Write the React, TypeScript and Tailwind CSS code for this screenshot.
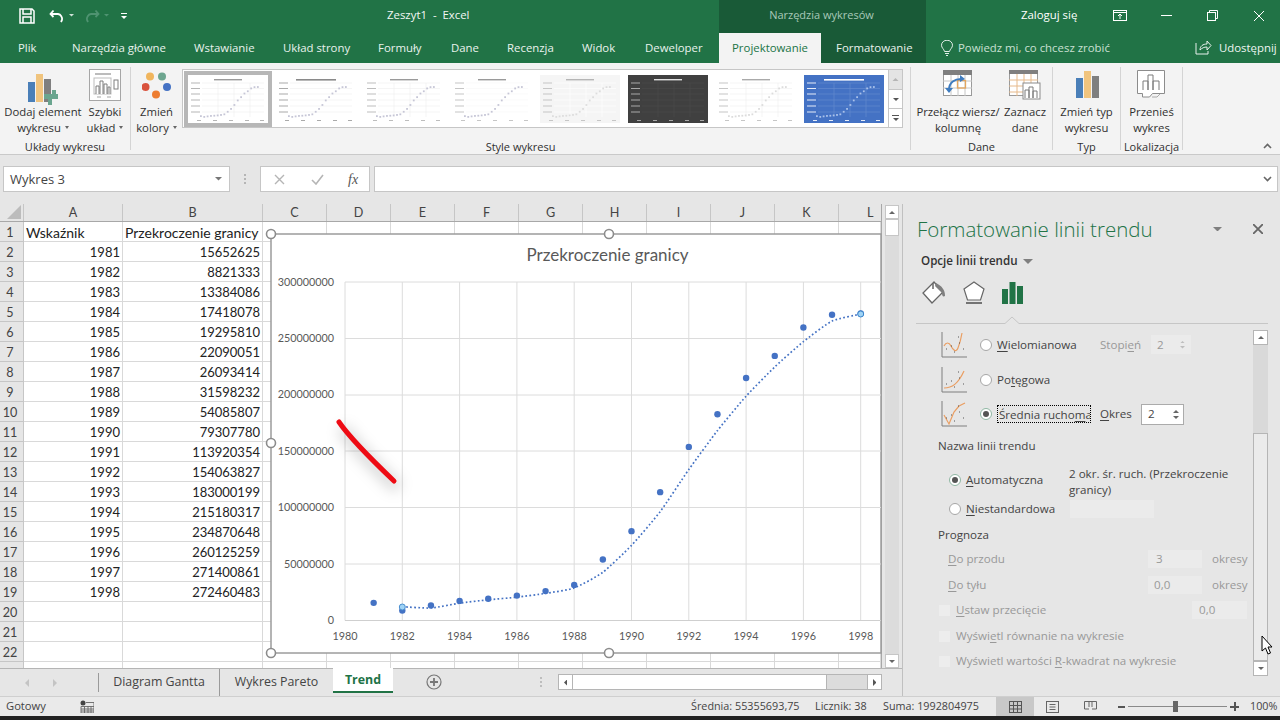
import React from "react";

const UI = "font-['Open_Sans','Noto_Sans',sans-serif]";
const CELL = "font-['Lato','Liberation_Sans',sans-serif]";

const DATA = [15652625, 8821333, 13384086, 17418078, 19295810, 22090051, 26093414, 31598232, 54085807, 79307780, 113920354, 154063827, 183000199, 215180317, 234870648, 260125259, 271400861, 272460483];
const YEARS = DATA.map((_, i) => 1981 + i);
const COLS: [string, number][] = [["A", 99], ["B", 140], ["C", 64], ["D", 64], ["E", 64], ["F", 64], ["G", 64], ["H", 64], ["I", 64], ["J", 64], ["K", 64], ["L", 42]];

const px = (year: number) => 345 + (year - 1980) * 28.65;
const py = (v: number) => 620.5 - (v / 300000000) * 338;

function smoothPath(pts: [number, number][]) {
  let d = `M${pts[0][0]} ${pts[0][1]}`;
  for (let i = 0; i < pts.length - 1; i++) {
    const p0 = pts[Math.max(0, i - 1)];
    const p1 = pts[i];
    const p2 = pts[i + 1];
    const p3 = pts[Math.min(pts.length - 1, i + 2)];
    d += ` C${p1[0] + (p2[0] - p0[0]) / 10} ${p1[1] + (p2[1] - p0[1]) / 10} ${p2[0] - (p3[0] - p1[0]) / 10} ${p2[1] - (p3[1] - p1[1]) / 10} ${p2[0]} ${p2[1]}`;
  }
  return d;
}

function Chart() {
  const avg: [number, number][] = DATA.slice(1).map((v, i) => [px(1982 + i), py((v + DATA[i]) / 2)]);
  const hs = [282, 338.5, 395, 451, 507.5, 564];
  const labels = ["300000000", "250000000", "200000000", "150000000", "100000000", "50000000", "0"];
  const yrs = [1980, 1982, 1984, 1986, 1988, 1990, 1992, 1994, 1996, 1998];
  const handles = [[271, 234], [609, 234], [271, 443], [271, 653], [609, 653]];
  return (
    <svg className="absolute left-[265px] top-[24px]" width={625} height={440} viewBox="265 228 625 440">
      <defs>
        <filter id="soft" x="-50%" y="-50%" width="200%" height="200%"><feGaussianBlur stdDeviation="7" /></filter>
      </defs>
      <rect x={271} y={234} width={610} height={419} fill="#fff" stroke="#9c9c9c" strokeWidth={1.5} />
      <text x={607.5} y={261} textAnchor="middle" fontSize={17} fill="#595959" fontFamily="Lato, sans-serif">Przekroczenie granicy</text>
      {hs.map((y) => <line key={y} x1={345} x2={881} y1={y} y2={y} stroke="#dcdcdc" />)}
      {yrs.map((y) => <line key={y} x1={px(y)} x2={px(y)} y1={282} y2={620.5} stroke="#dcdcdc" />)}
      <line x1={345} x2={881} y1={620.5} y2={620.5} stroke="#cfcfcf" />
      {labels.map((t, i) => <text key={t} x={334} y={285.5 + i * 56.4} textAnchor="end" fontSize={10.8} fill="#595959" fontFamily="Lato, sans-serif">{t}</text>)}
      {yrs.map((y) => <text key={y} x={px(y)} y={640} textAnchor="middle" fontSize={10.8} fill="#595959" fontFamily="Lato, sans-serif">{y}</text>)}
      <path d={smoothPath(avg)} fill="none" stroke="#4472c4" strokeWidth={1.7} strokeDasharray="1.7 2.3" />
      {DATA.map((v, i) => <circle key={i} cx={px(YEARS[i])} cy={py(v)} r={3.2} fill="#4472c4" />)}
      <circle cx={px(1982)} cy={607} r={3} fill="#9fd3f5" stroke="#4a90d0" strokeWidth={1} />
      <circle cx={px(1998)} cy={314} r={3} fill="#9fd3f5" stroke="#3c86cc" strokeWidth={1} />
      <path d="M342 428 C354 446 374 466 398 488" fill="none" stroke="#000" strokeOpacity={0.16} strokeWidth={12} filter="url(#soft)" />
      <path d="M339 422 C350 438 372 460 394 481" fill="none" stroke="#ee0b14" strokeWidth={5} strokeLinecap="round" />
      {handles.map(([x, y]) => <circle key={`${x}-${y}`} cx={x} cy={y} r={4.5} fill="#fff" stroke="#8c8c8c" strokeWidth={1.6} />)}
    </svg>
  );
}

type ThumbProps = { bg?: string; dot?: string; grid?: string; title?: string; dash?: string; bold?: boolean; vertical?: boolean; showDots?: boolean; titleY?: number };
function Thumb({ bg = "#fff", dot = "#c6c6d6", grid = "#efefef", title = "#9a9a9a", dash = "#b5b5b5", bold = false, vertical = true, showDots = true, titleY = 5 }: ThumbProps) {
  return (
    <svg width={80} height={48} viewBox="0 0 80 48" className="block shrink-0">
      <rect width={80} height={48} fill={bg} />
      <rect x={bold ? 20 : 26} y={titleY - 1} width={bold ? 40 : 28} height={bold ? 1.6 : 1.4} fill={title} />
      {[8, 13.5, 19, 25, 31, 37].map((y) => <line key={y} x1={14} x2={76} y1={y} y2={y} stroke={grid} strokeWidth={0.6} />)}
      {vertical && [30, 46, 62].map((x) => <line key={x} x1={x} x2={x} y1={8} y2={42} stroke={grid} strokeWidth={0.6} />)}
      {[8, 13.5, 19, 25, 31, 37].map((y) => <rect key={y} x={3} y={y - 0.5} width={9} height={1} fill={dash} />)}
      {[11, 27, 43, 59, 74].map((x) => <rect key={x} x={x - 2} y={45} width={4} height={1} fill={dash} />)}
      {showDots && DATA.map((v, i) => <rect key={i} x={12 + i * 3.35} y={42 - (v / 300000000) * 34} width={1.8} height={1.8} fill={dot} />)}
    </svg>
  );
}

function Btn({ icon, lines, w, arrow }: { icon: React.ReactNode; lines: string[]; w: number; arrow?: boolean }) {
  return (
    <div className="flex flex-col items-center shrink-0 pt-[5px]" style={{ width: w }}>
      <div className="h-[36px] flex items-start justify-center">{icon}</div>
      {lines.map((l, i) => (
        <div key={l} className="h-[16px] leading-[16px] whitespace-nowrap text-[11.3px] text-[#303030]">
          {l}
          {arrow && i === lines.length - 1 && <span className="inline-block align-middle ml-[4px] mb-[2px] w-0 h-0 border-x-[2.5px] border-x-transparent border-t-[3px] border-t-[#666]" />}
        </div>
      ))}
    </div>
  );
}

const GroupLabel = ({ children }: { children: React.ReactNode }) => (
  <div className="h-[16px] mt-[3px] leading-[16px] text-center text-[11px] text-[#303030] whitespace-nowrap">{children}</div>
);

const IconAdd = () => (
  <svg width={30} height={32} viewBox="0 0 30 32">
    <rect x={0} y={9} width={7} height={20} fill="#4a7fb8" />
    <rect x={8} y={1} width={7} height={28} fill="#f0c47e" />
    <rect x={16} y={6} width={7} height={23} fill="#7f7f7f" />
    <path d="M20 21h4v-4h4v4h2v5h-6v6h-4v-6h-4v-5z" fill="#6aa58f" />
  </svg>
);
const IconQuick = () => (
  <svg width={32} height={32} viewBox="0 0 32 32">
    <rect x={0.5} y={0.5} width={31} height={31} fill="#fff" stroke="#a6a6a6" />
    <line x1={6} x2={22} y1={5} y2={5} stroke="#a6a6a6" strokeWidth={1.5} />
    <rect x={5} y={9} width={17} height={16} fill="#fff" stroke="#bdbdbd" />
    <path d="M7 25v-8h3v8M11 25v-13h3v13M15 25v-10h3v10M19 25v-7h2v7" fill="#fff" stroke="#7f7f7f" />
    <rect x={25} y={11} width={4} height={9} fill="#fff" stroke="#7f7f7f" />
    <path d="M8 28h4M18 28h4" stroke="#a6a6a6" />
  </svg>
);
const IconColors = () => (
  <svg width={30} height={27} viewBox="0 0 30 27">
    <circle cx={8} cy={4.5} r={4} fill="#f0b55d" />
    <circle cx={20} cy={4.5} r={4} fill="#6da58f" />
    <circle cx={3.5} cy={15} r={4} fill="#d9533e" />
    <circle cx={25} cy={15} r={4} fill="#4472c4" />
    <circle cx={14} cy={22.5} r={4} fill="#ed7d31" />
  </svg>
);
const IconSwitch = () => (
  <svg width={30} height={28} viewBox="0 0 30 28">
    <rect x={0.5} y={0.5} width={28} height={25} fill="#fff" stroke="#9a9a9a" />
    <rect x={0} y={0} width={29} height={5} fill="#7f7f7f" />
    <path d="M0 11h29M0 18h29M8 5v21M15 5v21M22 5v21" stroke="#c6c6c6" />
    <rect x={14.5} y={10.5} width={8} height={7.5} fill="none" stroke="#e3a65e" strokeWidth={1.3} />
    <path d="M6 20C6 12 12 9 18 9" fill="none" stroke="#3f7cbf" strokeWidth={2} />
    <path d="M17 5l5 4-5 3zM2 18l8 0-4 5z" fill="#3f7cbf" />
  </svg>
);
const IconSelect = () => (
  <svg width={32} height={30} viewBox="0 0 32 30">
    <rect x={0.5} y={0.5} width={28} height={25} fill="#fff" stroke="#9a9a9a" />
    <rect x={0} y={0} width={29} height={4} fill="#7f7f7f" />
    <path d="M0 10h29M0 16h29M0 22h29M8 4v22M15 4v22M22 4v22" stroke="#e6b98a" />
    <rect x={14} y={13} width={17} height={16} fill="#fff" stroke="#8c8c8c" />
    <path d="M16 28v-8h4v8M20 28v-11h4v11M24 28v-7h4v7" fill="#fff" stroke="#7a7a7a" />
  </svg>
);
const IconType = () => (
  <svg width={24} height={28} viewBox="0 0 24 28">
    <rect x={1} y={8} width={7} height={20} fill="#4a7fb8" />
    <rect x={9} y={1} width={7} height={27} fill="#f0c47e" />
    <rect x={17} y={6} width={7} height={22} fill="#7f7f7f" />
  </svg>
);
const IconMove = () => (
  <svg width={30} height={28} viewBox="0 0 30 28">
    <path d="M.5.5h27v23h-12l-3 3.5H5.5v-3.5h-5z" fill="#fff" stroke="#8c8c8c" />
    <path d="M6 20v-9h5v9M11 20V5h5v15M16 20v-9h6v9" fill="#fff" stroke="#7a7a7a" />
    <path d="M15 27h5l3-3" fill="none" stroke="#aaa" />
  </svg>
);

const Chevron = ({ className = "" }: { className?: string }) => (
  <svg width={9} height={6} viewBox="0 0 9 6" className={className}><path d="M1 1l3.5 3.5L8 1" fill="none" stroke="#666" strokeWidth={1.6} /></svg>
);
const Tri = ({ dir = "down", color = "#6e6e6e", s = 4 }: { dir?: "down" | "up" | "left" | "right"; color?: string; s?: number }) => {
  const pts = { down: `0,0 ${2 * s},0 ${s},${s}`, up: `0,${s} ${2 * s},${s} ${s},0`, left: `${s},0 ${s},${2 * s} 0,${s}`, right: `0,0 0,${2 * s} ${s},${s}` }[dir];
  const horiz = dir === "down" || dir === "up";
  return <svg width={horiz ? 2 * s : s} height={horiz ? s : 2 * s} className="block"><polygon points={pts} fill={color} /></svg>;
};

function TitleBar() {
  const tabs: [string, number][] = [["Plik", 54], ["Narzędzia główne", 122], ["Wstawianie", 89], ["Układ strony", 95], ["Formuły", 73], ["Dane", 56], ["Recenzja", 75], ["Widok", 63], ["Deweloper", 74]];
  return (
    <div className={`flex h-[63px] text-[11.4px] ${UI}`}>
      <div className="w-[719px] bg-[#217346] flex flex-col shrink-0">
        <div className="h-[31px] flex items-center pl-[19px]">
          <div className="w-[368px] flex items-center">
            <svg width={16} height={16} viewBox="0 0 16 16" fill="none" stroke="#fff" strokeWidth={1.5}>
              <path d="M1 1h12l2 2v12H1z" /><path d="M4 1v5h8V1M4 15V9h8v6" />
            </svg>
            <svg width={16} height={14} viewBox="0 0 16 14" fill="none" stroke="#fff" strokeWidth={1.8} className="ml-[14px]">
              <path d="M4.5 1.5L1.5 5l3 3" /><path d="M2 5h7a5 5 0 0 1 4 6l-1 2" />
            </svg>
            <span className="ml-[4px]"><Tri color="#cfe3d8" s={2.5} /></span>
            <svg width={16} height={14} viewBox="0 0 16 14" fill="none" stroke="#4f9371" strokeWidth={1.8} className="ml-[10px]">
              <path d="M11.5 1.5L14.5 5l-3 3" /><path d="M14 5H7a5 5 0 0 0-4 6l1 2" />
            </svg>
            <span className="ml-[4px]"><Tri color="#4f9371" s={2.5} /></span>
            <div className="ml-[12px] flex flex-col items-center gap-[2px]">
              <div className="w-[6px] h-[1px] bg-white" />
              <Tri color="#fff" s={3} />
            </div>
          </div>
          <span className="text-[#f2f7f4] whitespace-nowrap pb-[2px]">Zeszyt1&nbsp; -&nbsp; Excel</span>
        </div>
        <div className="h-[32px] flex items-center pl-[18px] pt-[1px] text-[#e9f2ed]">
          {tabs.map(([t, w]) => <div key={t} className="shrink-0 whitespace-nowrap" style={{ width: w }}>{t}</div>)}
        </div>
      </div>
      <div className="w-[207px] bg-[#195a37] flex flex-col shrink-0">
        <div className="h-[33px] flex items-center justify-center pr-[2px] pb-[2px] text-[#a8c9b7] text-[11px]">Narzędzia wykresów</div>
        <div className="h-[30px] flex">
          <div className="w-[102px] bg-[#f3f3f3] text-[#217346] flex items-center justify-center">Projektowanie</div>
          <div className="pl-[15px] flex items-center text-[#e9f2ed] whitespace-nowrap">Formatowanie</div>
        </div>
      </div>
      <div className="flex-1 bg-[#217346] flex flex-col">
        <div className="h-[31px] flex items-center text-white">
          <span className="ml-[95px] w-[64px] whitespace-nowrap pb-[2px]">Zaloguj się</span>
          <svg width={14} height={11} viewBox="0 0 14 11" fill="none" stroke="#fff" className="ml-[28px]"><rect x={0.5} y={0.5} width={13} height={10} /><path d="M0 2.5h14M7 9V4M5 6l2-2 2 2" /></svg>
          <div className="w-[11px] h-[1px] bg-white ml-[34px]" />
          <svg width={11} height={11} viewBox="0 0 11 11" fill="none" stroke="#fff" className="ml-[35px]"><rect x={0.5} y={2.5} width={8} height={8} /><path d="M2.5 2.5v-2h8v8h-2" /></svg>
          <svg width={12} height={12} viewBox="0 0 12 12" stroke="#fff" className="ml-[35px]"><path d="M1 1l10 10M11 1L1 11" /></svg>
        </div>
        <div className="h-[32px] pt-[1px] flex items-center text-[#dfece5]">
          <svg width={14} height={16} viewBox="0 0 14 16" fill="none" stroke="#e2eee8" className="ml-[14px]"><path d="M4.5 11.5C4 9 1.5 8 1.5 5.2a5.5 5 0 0 1 11 0C12.5 8 10 9 9.5 11.5zM5 13.5h4M6 15.5h2" /></svg>
          <span className="ml-[4px] w-[237px] whitespace-nowrap text-[#c9e0d3]">Powiedz mi, co chcesz zrobić</span>
          <svg width={17} height={15} viewBox="0 0 17 15" fill="none" stroke="#e8f1ec"><path d="M1 3v11h12v-3M5 10c0-4 3-6 7-6V1l4 4.5L12 10V7C9 7 7 8 5 10z" /></svg>
          <span className="ml-[7px] whitespace-nowrap text-[#eff6f2]">Udostępnij</span>
        </div>
      </div>
    </div>
  );
}

function Ribbon() {
  const thumbs: ThumbProps[] = [
    { dash: "#c2c2c2" },
    { bold: true, title: "#8a8a8a", vertical: false, dash: "#aaaaaa" },
    { dash: "#bdbdbd", vertical: true },
    { grid: "#f7f7f7", vertical: false, dash: "#c6c6c6" },
    { bg: "#f5f5f5", title: "#b5b5b5", dash: "#c6c6c6", dot: "#dddddd", grid: "#ffffff" },
    { bg: "#404040", title: "#e0e0e0", dash: "#a8a8a8", grid: "#4a4a4a", showDots: false },
    { dot: "#dcdcdc", title: "#aaaaaa", dash: "#c6c6c6" },
    { bg: "#4472c4", title: "#ffffff", dash: "#e6ecf8", dot: "#a9c1ea", grid: "#6a8fd2", bold: true },
  ];
  return (
    <div className={`flex h-[92px] bg-[#f3f3f3] border-b border-[#c9c9c9] ${UI}`}>
      <div className="w-[131px] my-[4px] flex flex-col border-r border-[#d4d4d4] shrink-0">
        <div className="flex -mt-[4px]">
          <Btn w={86} icon={<div className="mt-[5px]"><IconAdd /></div>} lines={["Dodaj element", "wykresu"]} arrow />
          <Btn w={38} icon={<div className="mt-[1px]"><IconQuick /></div>} lines={["Szybki", "układ"]} arrow />
        </div>
        <GroupLabel>Układy wykresu</GroupLabel>
      </div>
      <div className="w-[780px] my-[4px] flex flex-col border-r border-[#d4d4d4] shrink-0">
        <div className="flex -mt-[4px]">
          <Btn w={51} icon={<div className="mt-[4px]"><IconColors /></div>} lines={["Zmień", "kolory"]} arrow />
          <div className="flex h-[59px] mt-[6px] w-[721px] border border-[#c6c6c6] bg-white">
            <div className="flex flex-1 items-center pl-[1px]">
              <div className="p-[4px] bg-[#b7b7b7]"><Thumb /></div>
              <div className="flex gap-[8px] pl-[4px]">
                {thumbs.slice(1).map((t, i) => <Thumb key={i} {...t} />)}
              </div>
            </div>
            <div className="w-[14px] shrink-0 flex flex-col border-l border-[#c6c6c6]">
              <div className="h-[20px] bg-[#e4e4e4] border-b border-[#c6c6c6] flex items-center justify-center"><Tri dir="up" color="#b5b5b5" s={3.5} /></div>
              <div className="h-[19px] border-b border-[#c6c6c6] flex items-center justify-center"><Tri color="#555" s={3} /></div>
              <div className="flex-1 flex flex-col items-center justify-center gap-[2px]"><div className="w-[7px] h-[1px] bg-[#555]" /><Tri color="#555" s={3} /></div>
            </div>
          </div>
        </div>
        <GroupLabel>Style wykresu</GroupLabel>
      </div>
      <div className="w-[142px] my-[4px] flex flex-col border-r border-[#d4d4d4] shrink-0">
        <div className="flex -mt-[4px] pl-[3px]">
          <Btn w={88} icon={<div className="mt-[2px]"><IconSwitch /></div>} lines={["Przełącz wiersz/", "kolumnę"]} />
          <Btn w={46} icon={<div className="mt-[2px]"><IconSelect /></div>} lines={["Zaznacz", "dane"]} />
        </div>
        <GroupLabel>Dane</GroupLabel>
      </div>
      <div className="w-[68px] my-[4px] flex flex-col border-r border-[#d4d4d4] shrink-0">
        <div className="flex -mt-[4px]"><Btn w={67} icon={<div className="mt-[2px]"><IconType /></div>} lines={["Zmień typ", "wykresu"]} /></div>
        <GroupLabel>Typ</GroupLabel>
      </div>
      <div className="w-[62px] my-[4px] flex flex-col border-r border-[#d4d4d4] shrink-0">
        <div className="flex -mt-[4px]"><Btn w={61} icon={<div className="mt-[2px]"><IconMove /></div>} lines={["Przenieś", "wykres"]} /></div>
        <GroupLabel>Lokalizacja</GroupLabel>
      </div>
      <div className="flex-1 flex items-end justify-end pr-[8px] pb-[5px]"><Chevron className="rotate-180" /></div>
    </div>
  );
}

function FormulaBar() {
  return (
    <div className={`h-[49px] bg-[#e6e6e6] flex pt-[11px] pl-[3px] ${UI}`}>
      <div className="w-[227px] h-[26px] bg-white border border-[#c6c6c6] flex items-center pl-[6px] pr-[7px] justify-between text-[13px] text-[#444]">
        <span className="whitespace-nowrap pt-[1px]">Wykres 3</span><Tri color="#777" s={3.5} />
      </div>
      <div className="w-[30px] h-[26px] flex flex-col items-center justify-center gap-[2px]">
        <div className="w-[2px] h-[2px] bg-[#b5b5b5]" /><div className="w-[2px] h-[2px] bg-[#b5b5b5]" /><div className="w-[2px] h-[2px] bg-[#b5b5b5]" />
      </div>
      <div className="w-[110px] h-[26px] bg-white border border-[#c6c6c6] flex items-center pl-[13px]">
        <svg width={11} height={11} viewBox="0 0 11 11" stroke="#b5b5b5" strokeWidth={1.4}><path d="M1 1l9 9M10 1L1 10" /></svg>
        <svg width={13} height={11} viewBox="0 0 13 11" fill="none" stroke="#b5b5b5" strokeWidth={1.6} className="ml-[26px]"><path d="M1 6l4 4 7-9" /></svg>
        <span className="ml-[24px] text-[14px] italic text-[#555] font-['Liberation_Serif',serif]">fx</span>
      </div>
      <div className="w-[904px] ml-[4px] h-[26px] bg-white border border-[#c6c6c6] flex items-center justify-end pr-[5px]"><Chevron /></div>
    </div>
  );
}

function Sheet() {
  const rows = Array.from({ length: 22 }, (_, i) => i + 1);
  return (
    <div className={`relative h-[464px] flex bg-white overflow-hidden ${CELL}`}>
      <div className="w-[881px] shrink-0 flex flex-col">
        <div className="h-[18px] flex bg-[#e6e6e6] border-b border-[#a8a8a8] text-[12.6px] text-[#444] box-content">
          <div className="w-[24px] shrink-0 border-r border-[#c6c6c6] flex items-end justify-end pr-[2px] pb-[2px]">
            <svg width={14} height={14}><polygon points="14,0 14,14 0,14" fill="#bcbcbc" /></svg>
          </div>
          {COLS.map(([c, w]) => <div key={c} className={`shrink-0 leading-[17px] ${c === "L" ? "text-left pl-[28px]" : "text-center border-r border-[#c6c6c6]"}`} style={{ width: w }}>{c}</div>)}
        </div>
        {rows.map((r) => (
          <div key={r} className="h-[20px] flex shrink-0 text-[13px] text-[#222]">
            <div className="w-[24px] shrink-0 bg-[#e6e6e6] border-r border-b border-[#c6c6c6] text-center pr-[3px] text-[12.6px] leading-[21px] text-[#444]">{r}</div>
            {COLS.map(([c, w]) => {
              let content: React.ReactNode = null;
              let cls = "text-right pr-[2px]";
              if (r === 1 && c === "A") { content = "Wskaźnik"; cls = "text-left pl-[2px] text-[14px]"; }
              if (r === 1 && c === "B") { content = "Przekroczenie granicy"; cls = "text-left pl-[2px] text-[14px]"; }
              if (r >= 2 && r <= 19 && c === "A") content = YEARS[r - 2];
              if (r >= 2 && r <= 19 && c === "B") content = DATA[r - 2];
              return <div key={c} className={`shrink-0 border-r border-b border-[#d9d9d9] leading-[21px] whitespace-nowrap ${cls}`} style={{ width: w }}>{content}</div>;
            })}
          </div>
        ))}
        <div className="h-[6px] flex shrink-0">
          <div className="w-[24px] shrink-0 bg-[#e6e6e6] border-r border-[#c6c6c6]" />
          {COLS.map(([c, w]) => <div key={c} className="shrink-0 border-r border-[#d9d9d9]" style={{ width: w }} />)}
        </div>
      </div>
      <div className="flex-1 bg-[#e6e6e6] border-l border-[#a8a8a8] flex flex-col items-center">
        <div className="w-[14px] bg-white border border-[#c6c6c6] h-[14px] mt-[1px] flex items-center justify-center"><Tri dir="up" color="#666" s={3} /></div>
        <div className="w-[14px] h-[17px] bg-white border border-[#c6c6c6]" />
        <div className="flex-1 w-[14px] bg-[#dcdcdc]" />
        <div className="w-[14px] bg-white border border-[#c6c6c6] h-[14px] flex items-center justify-center"><Tri color="#666" s={3} /></div>
      </div>
      <Chart />
    </div>
  );
}

function SheetTabs() {
  return (
    <div className={`h-[28px] bg-[#e6e6e6] border-t border-[#b5b5b5] flex text-[12.4px] text-[#444] ${UI}`}>
      <div className="w-[99px] flex items-center pl-[25px] gap-[24px] border-r border-[#9a9a9a] my-[4px]">
        <Tri dir="left" color="#c4c4c4" s={4} /><Tri dir="right" color="#c4c4c4" s={4} />
      </div>
      <div className="w-[121px] flex items-center justify-center border-r border-[#9a9a9a] whitespace-nowrap">Diagram Gantta</div>
      <div className="w-[113px] flex items-center justify-center whitespace-nowrap">Wykres Pareto</div>
      <div className="w-[60px] h-[25px] -mt-[1px] bg-white border-b-2 border-[#217346] text-center leading-[24px] font-bold text-[#217346] shrink-0">Trend</div>
      <div className="w-[82px] flex items-center justify-center pb-[2px]">
        <svg width={16} height={16} viewBox="0 0 16 16" fill="none" stroke="#777" strokeWidth={1.2}><circle cx={8} cy={8} r={7} /><path d="M8 4v8M4 8h8" strokeWidth={1.8} /></svg>
      </div>
      <div className="w-[83px] pl-[49px] flex flex-col items-center justify-center gap-[2px] pb-[2px]">
        <div className="w-[2px] h-[2px] bg-[#bdbdbd]" /><div className="w-[2px] h-[2px] bg-[#bdbdbd]" /><div className="w-[2px] h-[2px] bg-[#bdbdbd]" />
      </div>
      <div className="w-[324px] h-[16px] mt-[5px] flex bg-[#dcdcdc] border border-[#b5b5b5] shrink-0">
        <div className="w-[14px] bg-white border-r border-[#b5b5b5] flex items-center justify-center"><Tri dir="left" color="#555" s={3.5} /></div>
        <div className="w-[254px] bg-white border-r border-[#b5b5b5]" />
        <div className="flex-1" />
        <div className="w-[14px] bg-white border-l border-[#b5b5b5] flex items-center justify-center"><Tri dir="right" color="#555" s={3.5} /></div>
      </div>
    </div>
  );
}

const Radio = ({ on = false }: { on?: boolean }) => (
  <span className={`w-[12px] h-[12px] shrink-0 rounded-full bg-white border ${on ? "border-[#8fb7a3]" : "border-[#a6a6a6]"} flex items-center justify-center`}>
    {on && <span className="w-[6px] h-[6px] rounded-full bg-[#555]" />}
  </span>
);
const U = ({ children }: { children: React.ReactNode }) => <span className="underline underline-offset-2">{children}</span>;
const TrendIcon = ({ d }: { d: string }) => (
  <svg width={27} height={26} viewBox="0 0 27 26" className="shrink-0">
    <path d="M1 0v25h25" fill="none" stroke="#7f7f7f" />
    <path d={d} fill="none" stroke="#ea9e62" strokeWidth={1.2} />
    <path d="M5 17h1M10 14h1M13 20h1M18 11h1M22 17h1M17 5h1" stroke="#555" strokeDasharray="1 1" />
  </svg>
);
const Disabled = ({ w, v, pl = 8 }: { w: number; v?: string; pl?: number }) => (
  <div className="h-[18px] bg-[#ebebeb] shrink-0 text-[#999] leading-[18px]" style={{ width: w, paddingLeft: pl }}>{v}</div>
);

function Panel() {
  return (
    <div className={`relative w-[378px] shrink-0 bg-[#e6e6e6] border-l border-[#c0c0c0] flex flex-col text-[11.6px] text-[#444] ${UI}`}>
      <div className="h-[50px] flex items-center pl-[14px] pr-[17px]">
        <span className="flex-1 text-[20.5px] text-[#217346] font-light whitespace-nowrap">Formatowanie linii trendu</span>
        <span className="mr-[31px]"><Tri color="#7f7f7f" s={4.5} /></span>
        <svg width={10} height={10} viewBox="0 0 10 10" stroke="#666" strokeWidth={1.8}><path d="M0 0l10 10M10 0L0 10" /></svg>
      </div>
      <div className="h-[14px] flex items-center pl-[18px] gap-[5px] font-semibold text-[#333] whitespace-nowrap">
        Opcje linii trendu <Tri color="#7f7f7f" s={5} />
      </div>
      <div className="h-[26px] mt-[12px] flex items-center pl-[19px]">
        <svg width={25} height={24} viewBox="0 0 25 24">
          <path d="M12 1L1 12l9 10 11-11z" fill="#fff" stroke="#666" strokeWidth={1.3} />
          <path d="M11 2v6" stroke="#666" strokeWidth={1.5} />
          <path d="M14 2c6 3 9 7 9 13-2 1-3 0-3-3L13 5z" fill="#7f7f7f" />
        </svg>
        <svg width={22} height={24} viewBox="0 0 22 24" className="ml-[16px]">
          <path d="M11 1L21 8l-3.5 11H4.5L1 8z" fill="#fff" stroke="#666" strokeWidth={1.2} />
          <path d="M3 22h16" stroke="#666" strokeWidth={1.8} />
        </svg>
        <svg width={22} height={22} viewBox="0 0 22 22" fill="#217346" className="ml-[17px]"><rect x={0} y={7} width={6} height={15} /><rect x={7.5} y={0} width={6} height={22} /><rect x={15} y={4} width={6} height={18} /></svg>
      </div>
      <svg width={352} height={16} viewBox="0 0 352 16" className="ml-[13px] mt-[5px] shrink-0">
        <path d="M0 12.5H89L96 6l7 6.5H352" fill="none" stroke="#c6c6c6" />
      </svg>
      <div className="flex flex-1 min-h-0">
        <div className="w-[350px] shrink-0 h-[345px] overflow-hidden">
          <div className="h-[35px] flex items-center pl-[38px]">
            <TrendIcon d="M3 14c2-4 5-4 7 0s5 7 7 2 3-9 4-15" />
            <span className="ml-[12px]"><Radio /></span>
            <span className="ml-[5px] w-[103px] whitespace-nowrap"><U>W</U>ielomianowa</span>
            <span className="text-[#999] whitespace-nowrap w-[51px]">Stopi<U>e</U>ń</span>
            <div className="w-[40px] h-[19px] bg-[#ebebeb] flex items-center justify-between px-[6px] text-[#999] shrink-0"><span>2</span><span className="flex flex-col gap-[3px]"><Tri dir="up" color="#bdbdbd" s={2.5} /><Tri color="#bdbdbd" s={2.5} /></span></div>
          </div>
          <div className="h-[35px] flex items-center pl-[38px]">
            <TrendIcon d="M3 21c8 0 14-4 20-17" />
            <span className="ml-[12px]"><Radio /></span>
            <span className="ml-[5px] whitespace-nowrap">Po<U>t</U>ęgowa</span>
          </div>
          <div className="h-[34px] flex items-center pl-[38px]">
            <TrendIcon d="M3 14l5 9 5-12 5-6 6-3" />
            <span className="ml-[12px]"><Radio on /></span>
            <span className="ml-[5px] h-[18px] leading-[17px] w-[94px] pl-px border border-dotted border-black whitespace-nowrap overflow-hidden">Średnia rucho<U>m</U>a</span>
            <span className="ml-[9px] w-[41px] whitespace-nowrap"><U>O</U>kres</span>
            <div className="w-[43px] h-[21px] bg-white border border-[#ababab] flex items-center justify-between pl-[6px] pr-[4px] shrink-0"><span>2</span><span className="flex flex-col gap-[3px]"><Tri dir="up" color="#666" s={3} /><Tri color="#666" s={3} /></span></div>
          </div>
          <div className="h-[29px] flex items-center pl-[35px] whitespace-nowrap">Nazwa linii trendu</div>
          <div className="h-[36px] mt-[2px] flex items-center pl-[46px]">
            <Radio on />
            <span className="ml-[5px] w-[103px] whitespace-nowrap"><U>A</U>utomatyczna</span>
            <span className="w-[178px] leading-[16px] mt-[3px]">2 okr. śr. ruch. (Przekroczenie granicy)</span>
          </div>
          <div className="h-[22px] flex items-center pl-[46px]">
            <Radio />
            <span className="ml-[5px] w-[104px] whitespace-nowrap"><U>N</U>iestandardowa</span>
            <Disabled w={84} />
          </div>
          <div className="h-[26px] pt-[7px] pl-[35px] leading-[16px] whitespace-nowrap">Prognoza</div>
          <div className="h-[26px] flex items-center pl-[45px] text-[#999]">
            <span className="w-[200px] shrink-0 whitespace-nowrap"><U>D</U>o przodu</span>
            <Disabled w={54} v="3" />
            <span className="ml-[10px] whitespace-nowrap">okresy</span>
          </div>
          <div className="h-[26px] flex items-center pl-[45px] text-[#999]">
            <span className="w-[200px] shrink-0 whitespace-nowrap"><U>D</U>o tyłu</span>
            <Disabled w={54} v="0,0" pl={6} />
            <span className="ml-[10px] whitespace-nowrap">okresy</span>
          </div>
          <div className="h-[24px] flex items-center pl-[36px] text-[#999]">
            <span className="w-[11px] h-[11px] bg-[#ededed] shrink-0" />
            <span className="ml-[6px] w-[236px] shrink-0 whitespace-nowrap"><U>U</U>staw przecięcie</span>
            <Disabled w={55} v="0,0" pl={7} />
          </div>
          <div className="h-[28px] flex items-center pl-[36px] text-[#999]">
            <span className="w-[11px] h-[11px] bg-[#ededed] shrink-0" />
            <span className="ml-[6px] whitespace-nowrap">Wyświ<U>e</U>tl równanie na wykresie</span>
          </div>
          <div className="h-[22px] flex items-center pl-[36px] text-[#999]">
            <span className="w-[11px] h-[11px] bg-[#ededed] shrink-0" />
            <span className="ml-[6px] whitespace-nowrap">Wyświetl wartości <U>R</U>-kwadrat na wykresie</span>
          </div>
        </div>
        <div className="w-[15px] h-[346px] flex flex-col mt-[3px] shrink-0">
          <div className="h-[15px] bg-white border border-[#b5b5b5] flex items-center justify-center"><Tri dir="up" color="#666" s={3} /></div>
          <div className="h-[88px] bg-[#d9d9d9]" />
          <div className="flex-1 bg-[#ebebeb] border border-[#b5b5b5]" />
          <div className="h-[15px] bg-white border border-[#b5b5b5] flex items-center justify-center"><Tri color="#666" s={3} /></div>
        </div>
      </div>
      <svg width={13} height={20} viewBox="0 0 13 20" className="absolute left-[358px] top-[431px]">
        <path d="M1 1v15l3.5-3 2.5 6 2.5-1-2.5-6H11z" fill="#fff" stroke="#000" />
      </svg>
    </div>
  );
}

function StatusBar() {
  return (
    <div className={`h-[20px] bg-[#eaeaea] border-t border-[#cfcfcf] flex items-center text-[10.8px] text-[#444] ${UI}`}>
      <span className="ml-[6px] w-[74px] whitespace-nowrap text-[11.2px]">Gotowy</span>
      <svg width={14} height={13} viewBox="0 0 14 13">
        <circle cx={3} cy={3} r={2.5} fill="#444" />
        <path d="M6 2.5h8V13H1V6.5h13M1 9h13M1 11h13M4.5 6.5V13M8 6.5V13M11 6.5V13" fill="none" stroke="#666" strokeWidth={0.9} />
      </svg>
      <span className="ml-[597px] w-[124px] whitespace-nowrap">Średnia: 55355693,75</span>
      <span className="w-[68px] whitespace-nowrap">Licznik: 38</span>
      <span className="w-[113px] whitespace-nowrap">Suma: 1992804975</span>
      <div className="w-[38px] h-[19px] bg-[#c8c8c8] flex items-center justify-center">
        <svg width={13} height={12} viewBox="0 0 13 12" fill="none" stroke="#555"><rect x={0.5} y={0.5} width={12} height={11} /><path d="M4.5 0v12M8.5 0v12M0 4.5h13M0 8h13" /></svg>
      </div>
      <svg width={13} height={12} viewBox="0 0 13 12" fill="none" stroke="#666" className="ml-[12px]"><rect x={0.5} y={0.5} width={12} height={11} /><path d="M3.5 3.5h6M3.5 6h6M3.5 8.5h6" /></svg>
      <svg width={13} height={12} viewBox="0 0 13 12" fill="none" stroke="#666" className="ml-[25px]"><path d="M.5 8V.5h12V8M.5 8h4.5M8 8h4.5M5 .5V6M8 .5V6" /></svg>
      <div className="w-[7px] h-[2px] bg-[#555] ml-[21px]" />
      <div className="ml-[3px] relative w-[99px] h-[1px] bg-[#8a8a8a]">
        <div className="absolute left-[45px] -top-[5px] w-[5px] h-[11px] bg-[#666]" />
      </div>
      <div className="ml-[3px] relative w-[9px] h-[9px]">
        <div className="absolute left-0 top-[3.5px] w-[9px] h-[2px] bg-[#555]" />
        <div className="absolute left-[3.5px] top-0 w-[2px] h-[9px] bg-[#555]" />
      </div>
      <span className="ml-[11px] whitespace-nowrap">100%</span>
    </div>
  );
}

export default function App() {
  return (
    <div className="w-[1280px] h-[720px] overflow-hidden flex flex-col bg-[#e6e6e6]">
      <TitleBar />
      <Ribbon />
      <FormulaBar />
      <div className="flex h-[492px]">
        <div className="w-[902px] shrink-0 flex flex-col">
          <Sheet />
          <SheetTabs />
        </div>
        <Panel />
      </div>
      <StatusBar />
      <div className="h-[4px] bg-[#222]" />
    </div>
  );
}
